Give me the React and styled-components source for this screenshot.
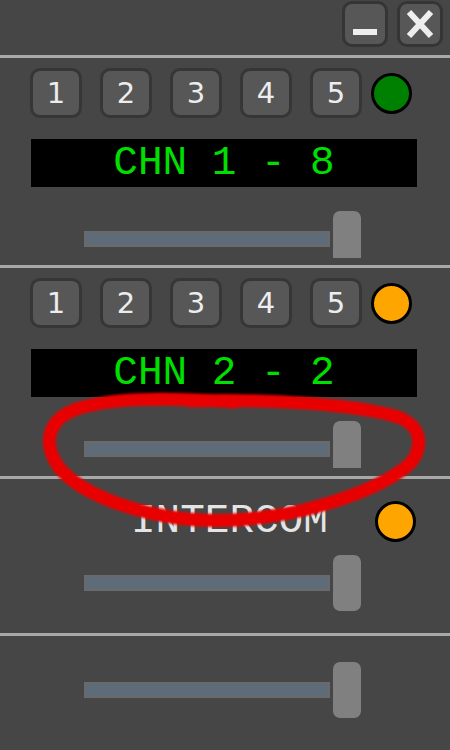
import React from "react";
import styled, { createGlobalStyle } from "styled-components";

const GlobalStyle = createGlobalStyle`
  html, body {
    margin: 0;
    padding: 0;
    background: #464646;
    overflow: hidden;
  }
`;

const MONO = `"Courier New", Courier, "Nimbus Mono PS", "Liberation Mono", monospace`;

const Screen = styled.div`
  position: relative;
  width: 450px;
  height: 750px;
  background: #464646;
  overflow: hidden;
`;

const TopBar = styled.div`
  height: 55px;
  display: flex;
  justify-content: flex-end;
  align-items: flex-start;
  gap: 9px;
  padding: 1px 7px 0 0;
  box-sizing: border-box;
`;

const WindowButton = styled.div`
  width: 46px;
  height: 46px;
  box-sizing: border-box;
  border: 3px solid #353535;
  border-radius: 10px;
  background: #575757;
  display: flex;
  align-items: center;
  justify-content: center;
`;

const Divider = styled.div`
  height: 3px;
  background: #a9a9a9;
`;

const Section = styled.div`
  padding-top: ${(p) => p.$top}px;
  height: ${(p) => p.$height}px;
  box-sizing: border-box;
  display: flex;
  flex-direction: column;
`;

const ButtonRow = styled.div`
  display: flex;
  align-items: center;
  padding-left: 30px;
  gap: 18px;
`;

const NumberButton = styled.div`
  width: 52px;
  height: 50px;
  box-sizing: border-box;
  border: 3px solid #363636;
  border-radius: 10px;
  background: #575757;
  color: #ededed;
  font-family: "DejaVu Sans", sans-serif;
  font-size: 29px;
  display: flex;
  align-items: center;
  justify-content: center;
`;

const StatusLed = styled.div`
  width: 41px;
  height: 41px;
  box-sizing: border-box;
  border-radius: 50%;
  border: 3px solid #000;
  background: ${(p) => p.$color};
  margin-left: ${(p) => p.$offset}px;
`;

const Display = styled.div`
  margin: 21px 0 0 31px;
  width: 386px;
  height: 48px;
  background: #000;
  color: #00e000;
  font-family: ${MONO};
  font-size: 41px;
  display: flex;
  align-items: center;
  justify-content: center;
  white-space: pre;
`;

const SliderWrap = styled.div`
  margin: ${(p) => p.$top}px 0 0 84px;
  height: ${(p) => p.$clip}px;
  overflow: hidden;
  display: flex;
  align-items: flex-start;
  gap: 3px;
`;

const Track = styled.div`
  margin-top: 20px;
  width: 246px;
  height: 16px;
  box-sizing: border-box;
  background: #5e6c7a;
  border: 2px solid #6a6a6a;
`;

const Thumb = styled.div`
  width: 28px;
  height: 56px;
  border-radius: 7px;
  background: #808080;
`;

const ChannelHeader = styled.div`
  height: 42px;
  display: flex;
  align-items: center;
  padding-left: 131px;
`;

const Label = styled.div`
  width: 197px;
  color: #e4e4e4;
  font-family: ${MONO};
  font-size: 41px;
  line-height: 42px;
`;

const Annotation = styled.svg`
  position: absolute;
  left: 0;
  top: 0;
  pointer-events: none;
`;

function Slider({ top, clip = 56 }) {
  return (
    <SliderWrap $top={top} $clip={clip}>
      <Track />
      <Thumb />
    </SliderWrap>
  );
}

function Channel({ name, led }) {
  return (
    <>
      <ButtonRow>
        {[1, 2, 3, 4, 5].map((n) => (
          <NumberButton key={n}>{n}</NumberButton>
        ))}
        <StatusLed $color={led} $offset={-9} />
      </ButtonRow>
      <Display>{name}</Display>
      <Slider top={24} clip={47} />
    </>
  );
}

export default function App() {
  return (
    <Screen>
      <GlobalStyle />
      <TopBar>
        <WindowButton>
          <svg width="26" height="26" viewBox="0 0 26 26">
            <rect x="1" y="18" width="24" height="6" fill="#eeeeee" />
          </svg>
        </WindowButton>
        <WindowButton>
          <svg width="30" height="30" viewBox="0 0 30 30">
            <path d="M4 3 L26 27 M26 3 L4 27" stroke="#eeeeee" strokeWidth="6" />
          </svg>
        </WindowButton>
      </TopBar>
      <Divider />
      <Section $top={10} $height={207}>
        <Channel name="CHN 1 - 8" led="#008000" />
      </Section>
      <Divider />
      <Section $top={10} $height={208}>
        <Channel name="CHN 2 - 2" led="#ffa500" />
      </Section>
      <Divider />
      <Section $top={21} $height={154}>
        <ChannelHeader>
          <Label>INTERCOM</Label>
          <StatusLed $color="#ffa500" $offset={47} />
        </ChannelHeader>
        <Slider top={13} />
      </Section>
      <Divider />
      <Section $top={26} $height={114}>
        <Slider top={0} />
      </Section>

      <Annotation width="450" height="750" viewBox="0 0 450 750">
        <defs>
          <filter id="soft" x="-10%" y="-10%" width="120%" height="120%">
            <feGaussianBlur stdDeviation="0.8" />
          </filter>
        </defs>
        <path
          d="M190 401 C270 399 355 404 398 417 C426 427 424 456 402 470 C380 486 345 500 300 511 C258 520 210 524 165 516 C120 508 76 490 58 466 C42 442 49 420 74 410 C108 398 160 397 235 402"
          fill="none"
          stroke="#e80000"
          strokeWidth="13"
          strokeLinecap="round"
          filter="url(#soft)"
        />
      </Annotation>
    </Screen>
  );
}
